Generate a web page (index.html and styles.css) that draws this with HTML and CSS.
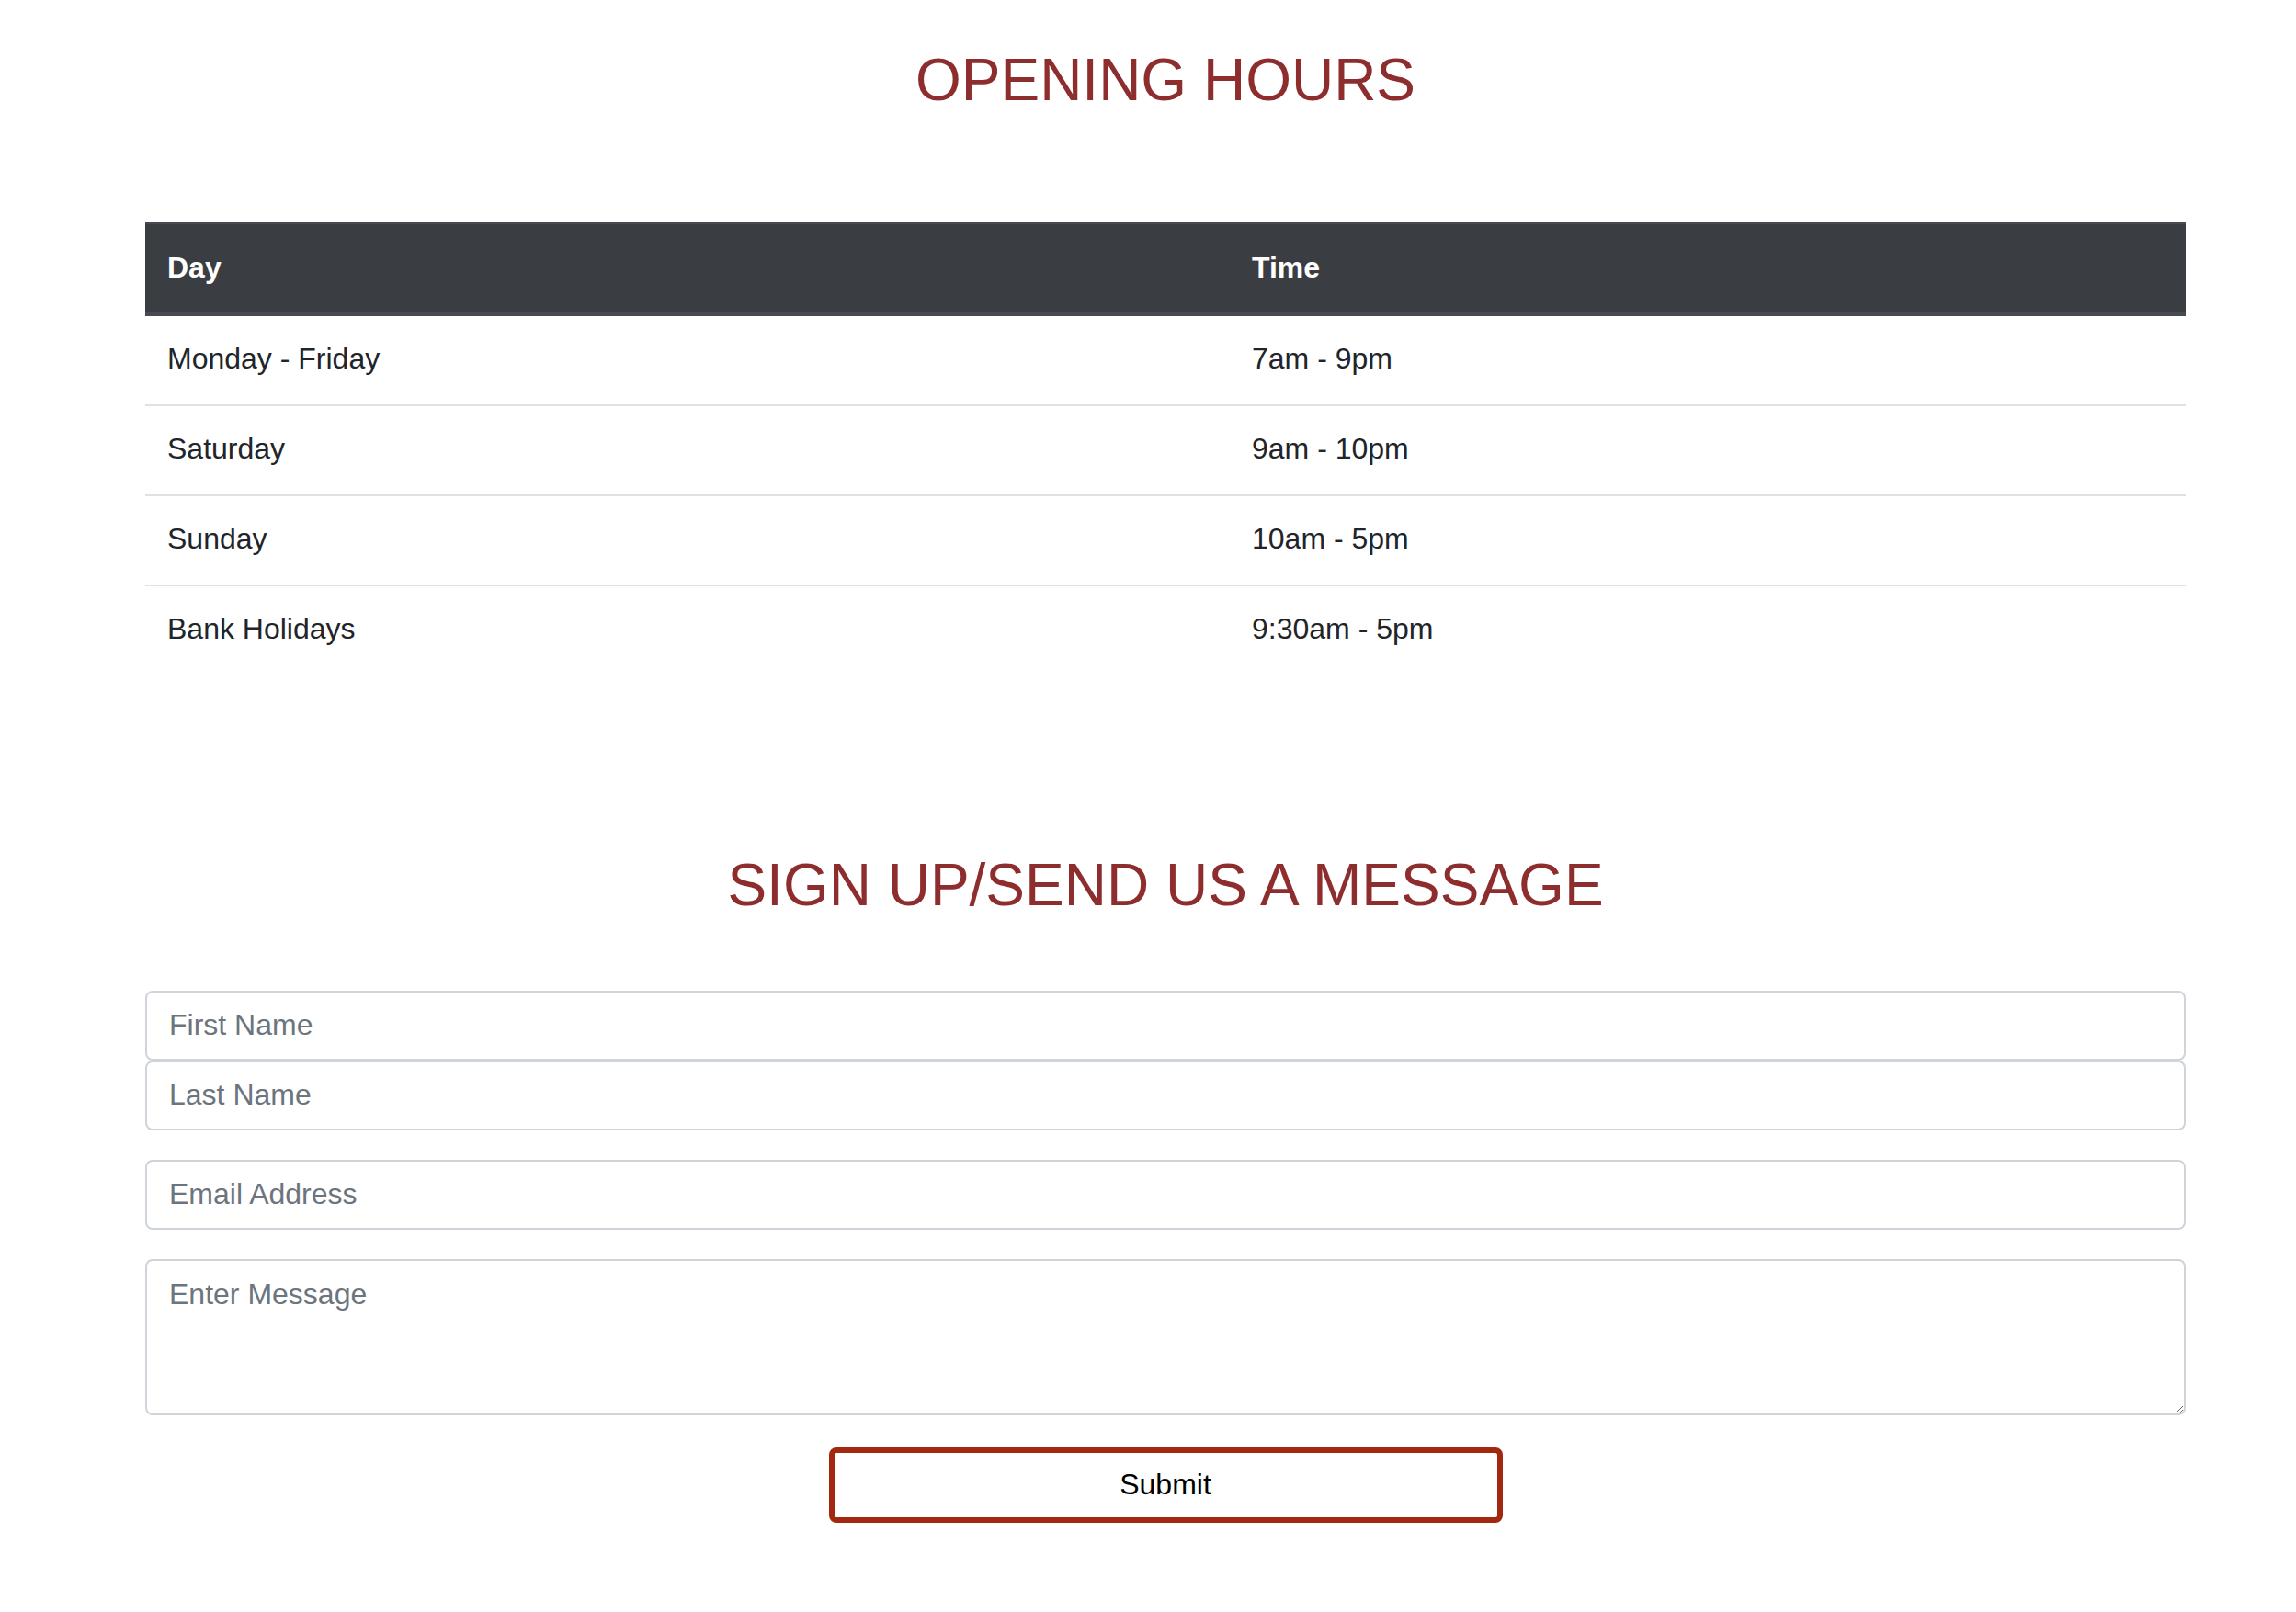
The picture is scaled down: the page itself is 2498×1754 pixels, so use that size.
FILE: index.html
```html
<!DOCTYPE html>
<html lang="en">
<head>
<meta charset="utf-8">
<title>Opening Hours</title>
<link rel="stylesheet" href="styles.css">
</head>
<body>
<div class="container">
  <h2 class="title">OPENING HOURS</h2>
  <table class="hours">
    <thead>
      <tr><th class="col-day">Day</th><th>Time</th></tr>
    </thead>
    <tbody>
      <tr><td>Monday - Friday</td><td>7am - 9pm</td></tr>
      <tr><td>Saturday</td><td>9am - 10pm</td></tr>
      <tr><td>Sunday</td><td>10am - 5pm</td></tr>
      <tr><td>Bank Holidays</td><td>9:30am - 5pm</td></tr>
    </tbody>
  </table>

  <h2 class="title title-form">SIGN UP/SEND US A MESSAGE</h2>
  <form class="form">
    <input class="field" type="text" placeholder="First Name">
    <input class="field" type="text" placeholder="Last Name">
    <input class="field gap" type="email" placeholder="Email Address">
    <textarea class="field area gap" placeholder="Enter Message"></textarea>
    <button class="submit" type="button">Submit</button>
  </form>
</div>
</body>
</html>
```
FILE: styles.css
```css
html, body {
  margin: 0;
  padding: 0;
  background: #ffffff;
}
body {
  font-family: "Liberation Sans", Arial, Helvetica, sans-serif;
  font-size: 32px;
  line-height: 1.5;
  color: #212529;
}
.container {
  width: 2220px;
  margin-left: 158px;
}
.title {
  margin: 49px 0 0;
  font-size: 64px;
  font-weight: normal;
  line-height: 1.2;
  text-align: center;
  color: #8e2d2e;
}
.hours {
  width: 100%;
  margin-top: 116px;
  border-collapse: separate;
  border-spacing: 0;
}
.hours th,
.hours td {
  padding: 22px 24px 26px;
  line-height: 48px;
  text-align: left;
  vertical-align: top;
}
.hours th {
  padding: 23px 24px 25px;
  background: #3a3d42;
  color: #ffffff;
  font-weight: bold;
  border-top: 2px solid #474b51;
  border-bottom: 4px solid #474b51;
}
.hours .col-day {
  width: 1132px;
}
.hours td {
  border-top: 2px solid #dee2e6;
}
.hours tbody tr:first-child td {
  border-top: none;
}
.title-form {
  margin-top: 191px;
}
.form {
  display: flex;
  flex-direction: column;
  margin-top: 76px;
}
.field {
  display: block;
  box-sizing: border-box;
  width: 100%;
  height: 76px;
  margin: 0;
  padding: 12px 24px;
  border: 2px solid #ced4da;
  border-radius: 8px;
  font-family: "Liberation Sans", Arial, Helvetica, sans-serif;
  font-size: 32px;
  line-height: 48px;
  color: #495057;
  background: #ffffff;
}
.field::placeholder {
  color: #6c757d;
  opacity: 1;
}
.gap {
  margin-top: 32px;
}
.area {
  height: 170px;
  resize: vertical;
}
.submit {
  box-sizing: border-box;
  align-self: center;
  width: 733px;
  height: 82px;
  margin-top: 35px;
  border: 6px solid #a2290f;
  border-radius: 8px;
  background: #ffffff;
  font-family: "Liberation Sans", Arial, Helvetica, sans-serif;
  font-size: 32px;
  color: #000000;
}
```
